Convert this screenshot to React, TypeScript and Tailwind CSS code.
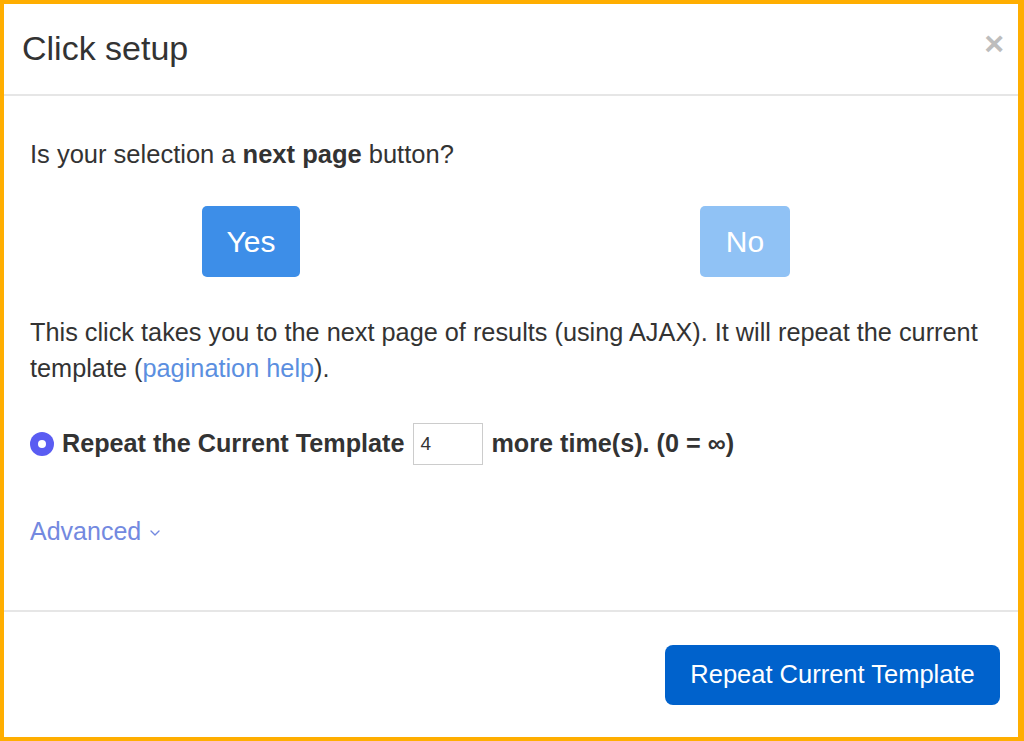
import { ChevronDown } from 'lucide-react'

export default function App() {
  return (
    <div
      className="w-[1024px] h-[741px] bg-white border-[#ffae00] border-t-4 border-l-4 border-b-4 border-r-[6px] flex flex-col text-[#333]"
      style={{ fontFamily: '"Liberation Sans", Arial, sans-serif' }}
    >
      {/* header */}
      <div className="h-[92px] shrink-0 flex items-center justify-between pl-[18px] pr-[14px] border-b-2 border-[#e6e6e6]">
        <h1 className="text-[34px] text-[#333] pb-[1px]">Click setup</h1>
        <button className="text-[#bdbdbd] text-[34px] font-bold leading-none mb-[12px]">×</button>
      </div>

      {/* body */}
      <div className="flex-1 flex flex-col">
        <p className="mt-[43px] pl-[26px] text-[25.5px] leading-[30px]">
          Is your selection a <b>next page</b> button?
        </p>

        <div className="grid grid-cols-2 mt-[37px] pr-[26px]">
          <div className="flex justify-center">
            <button className="w-[98px] h-[71px] rounded-[5px] bg-[#3d8ee8] text-white text-[30px]">Yes</button>
          </div>
          <div className="flex justify-center">
            <button className="w-[90px] h-[71px] rounded-[5px] bg-[#90c2f5] text-white text-[30px]">No</button>
          </div>
        </div>

        <p className="mt-[37px] pl-[26px] pr-[20px] text-[25.3px] leading-[36px]">
          This click takes you to the next page of results (using AJAX). It will repeat the current template (<a className="text-[#5b8fe0]">pagination help</a>).
        </p>

        <div className="mt-[37px] pl-[26px] flex items-center text-[25.2px] font-bold">
          <span className="w-[24px] h-[24px] rounded-full bg-[#5a5cf2] flex items-center justify-center mr-[8px]">
            <span className="w-[8px] h-[8px] rounded-full bg-white" />
          </span>
          <span>Repeat the Current Template</span>
          <input
            defaultValue="4"
            className="ml-[9px] mr-[8px] w-[70px] h-[42px] border border-[#cccccc] px-[6px] text-[19px] font-normal text-[#333] outline-none"
          />
          <span>more time(s). (0 = ∞)</span>
        </div>

        <a className="mt-[48px] pl-[26px] flex items-center text-[25px] text-[#7389e0]">
          Advanced
          <ChevronDown className="w-[16px] h-[16px] ml-[6px] mt-[2px]" strokeWidth={2} />
        </a>
      </div>

      {/* footer */}
      <div className="h-[127px] shrink-0 border-t-2 border-[#e6e6e6] flex items-center justify-end pr-[18px]">
        <button className="w-[335px] h-[60px] rounded-[8px] bg-[#0062cc] text-white text-[25.5px]">
          Repeat Current Template
        </button>
      </div>
    </div>
  )
}
